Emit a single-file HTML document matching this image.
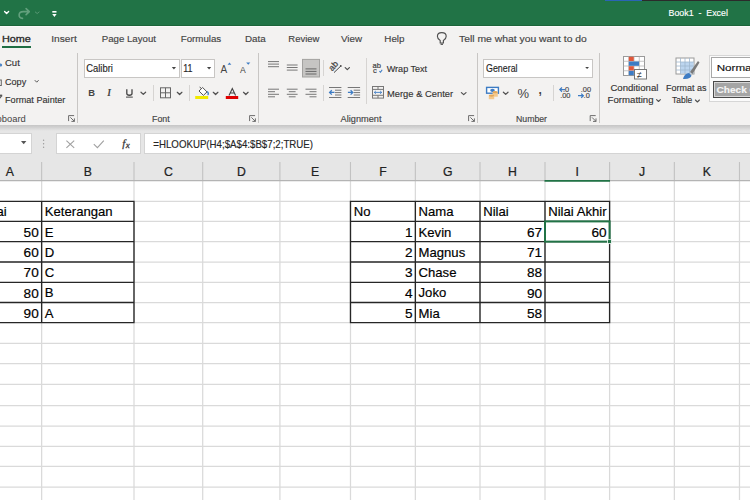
<!DOCTYPE html>
<html><head><meta charset="utf-8">
<style>
*{margin:0;padding:0;box-sizing:border-box}
html,body{width:750px;height:500px;overflow:hidden;background:#fff;font-family:"Liberation Sans",sans-serif;position:relative}
.a{position:absolute;white-space:pre}
.t{position:absolute;white-space:pre;transform-origin:0 0;line-height:normal}
.vd{position:absolute;width:1px;background:#c8c6c4}
.box{position:absolute;background:#fff;border:1px solid #c8c6c4}
.fb{position:absolute;background:#fff;border:1px solid #d4d4d4}
.ch{position:absolute;top:163px;font-size:13px;color:#333;text-align:center;height:18px;line-height:18px}
.cv{position:absolute;top:162px;width:1px;height:18px;background:#bababa}
.gv{position:absolute;top:181px;width:1px;height:319px;background:#dadada}
.gh{position:absolute;left:0;width:750px;height:1px;background:#dadada}
.c{position:absolute;font-size:13px;color:#000;white-space:pre;line-height:20px;height:20px}
.tb{position:absolute;background:#1a1a1a}
svg{position:absolute;left:0;top:0}
</style></head><body>
<div class="a" style="left:0;top:0;width:750px;height:26px;background:#217346"></div>
<div class="a" style="left:605px;top:0;width:37px;height:1px;background:#2a64b5"></div>
<div class="a" style="left:642px;top:0;width:108px;height:1px;background:#2b2b2b"></div>
<div class="a" style="left:0;top:26px;width:750px;height:99px;background:#f3f2f1"></div>
<div class="a" style="left:0;top:25px;width:750px;height:1px;background:#1c6439"></div>
<div class="a" style="left:0;top:26px;width:750px;height:1px;background:#fafafa"></div>
<div class="a" style="left:0;top:125px;width:750px;height:56px;background:#e6e6e6"></div>
<div class="a" style="left:0;top:125px;width:750px;height:6px;background:linear-gradient(#c6c6c6,#d0d0d0 35%,#dedede 75%,#e6e6e6)"></div>

<!-- tab underline -->
<div class="a" style="left:2px;top:46px;width:29px;height:2px;background:#1f6e43"></div>

<!-- dividers -->
<div class="vd" style="left:77px;top:53px;height:70px"></div>
<div class="vd" style="left:258px;top:53px;height:70px"></div>
<div class="vd" style="left:366px;top:58px;height:46px;background:#d6d4d2"></div>
<div class="vd" style="left:477px;top:53px;height:70px"></div>
<div class="vd" style="left:599px;top:53px;height:70px"></div>
<div class="vd" style="left:153px;top:85px;height:16px;background:#d6d4d2"></div>
<div class="vd" style="left:189px;top:85px;height:16px;background:#d6d4d2"></div>
<div class="vd" style="left:323px;top:60px;height:16px;background:#d6d4d2"></div>
<div class="vd" style="left:323px;top:85px;height:16px;background:#d6d4d2"></div>
<div class="vd" style="left:553px;top:85px;height:16px;background:#d6d4d2"></div>

<!-- combo boxes -->
<div class="box" style="left:84px;top:59px;width:96px;height:19px"></div>
<div class="box" style="left:181px;top:59px;width:34px;height:19px"></div>
<div class="box" style="left:483px;top:59px;width:110px;height:19px"></div>

<!-- styles gallery -->
<div class="a" style="left:709px;top:55px;width:60px;height:47px;border:1px solid #d6d6d6;background:#fbfbfb"></div>
<div class="a" style="left:711px;top:57px;width:60px;height:21px;border:1px solid #a8a8a8;background:#fff"></div>
<div class="a" style="left:713px;top:81px;width:60px;height:17px;background:#a5a5a5;border:1.5px solid #4a4a4a;box-shadow:inset 0 0 0 1px #d8d8d8"></div>
<!-- formula bar boxes -->
<div class="fb" style="left:-2px;top:133px;width:34px;height:21px"></div>
<div class="fb" style="left:56px;top:133px;width:85px;height:21px"></div>
<div class="fb" style="left:144px;top:133px;width:620px;height:21px"></div>

<!-- column I selected header -->



<svg width="750" height="500" viewBox="0 0 750 500" style="position:absolute;left:0;top:0;font-family:'Liberation Sans',sans-serif">
<path d="M0,343.36 H750 M0,363.52 H750 M0,384.48 H750 M0,405.6 H750 M0,426.24 H750 M0,446.36 H750 M0,466.48 H750 M0,487.12 H750 M134,201.4 H350 M609.6,201.4 H750 M134,221.4 H350 M609.6,221.4 H750 M134,241.64 H350 M609.6,241.64 H750 M134,262.0 H350 M609.6,262.0 H750 M134,282.4 H350 M609.6,282.4 H750 M134,302.5 H350 M609.6,302.5 H750 M134,322.6 H350 M609.6,322.6 H750 M41.64,181 V500 M134.0,181 V500 M202.7,181 V500 M279.9,181 V500 M350.48,181 V500 M415.36,181 V500 M480.0,181 V500 M545.0,181 V500 M609.6,181 V500 M674.36,181 V500 M739.48,181 V500" stroke="#dadada" stroke-width="1.25" fill="none"/>
<path d="M41.64,162 V180.5 M134.0,162 V180.5 M202.7,162 V180.5 M279.9,162 V180.5 M350.48,162 V180.5 M415.36,162 V180.5 M480.0,162 V180.5 M545.0,162 V180.5 M609.6,162 V180.5 M674.36,162 V180.5 M739.48,162 V180.5" stroke="#c2c2c2" stroke-width="1.1" fill="none"/>
<path d="M0,180.6 H750" stroke="#b4b4b4" stroke-width="1.2"/>
<path d="M544.5,180.9 H610" stroke="#217346" stroke-width="1.8"/>
<path d="M-5,201.4 H134.6 M349.8,201.4 H610.3 M-5,221.4 H134.6 M349.8,221.4 H610.3 M-5,241.64 H134.6 M349.8,241.64 H610.3 M-5,262.0 H134.6 M349.8,262.0 H610.3 M-5,282.4 H134.6 M349.8,282.4 H610.3 M-5,302.5 H134.6 M349.8,302.5 H610.3 M-5,322.6 H134.6 M349.8,322.6 H610.3 M41.64,201.4 V322.6 M134.0,201.4 V322.6 M350.48,201.4 V322.6 M415.36,201.4 V322.6 M480.0,201.4 V322.6 M545.0,201.4 V322.6 M609.6,201.4 V322.6" stroke="#262626" stroke-width="1.35" fill="none"/>
<rect x="545.0" y="221.4" width="64.60000000000002" height="20.23999999999998" fill="none" stroke="#217346" stroke-width="2"/>
<rect x="607.6" y="239.64" width="4" height="4" fill="#217346" stroke="#fff" stroke-width="0.8"/>
<text x="9.82" y="176" font-size="13.6" fill="#222" stroke="#222" stroke-width="0.25" text-anchor="middle" transform="translate(9.82,0) scale(0.9,1) translate(-9.82,0)">A</text>
<text x="87.82" y="176" font-size="13.6" fill="#222" stroke="#222" stroke-width="0.25" text-anchor="middle" transform="translate(87.82,0) scale(0.9,1) translate(-87.82,0)">B</text>
<text x="168.35" y="176" font-size="13.6" fill="#222" stroke="#222" stroke-width="0.25" text-anchor="middle" transform="translate(168.35,0) scale(0.9,1) translate(-168.35,0)">C</text>
<text x="241.30" y="176" font-size="13.6" fill="#222" stroke="#222" stroke-width="0.25" text-anchor="middle" transform="translate(241.30,0) scale(0.9,1) translate(-241.30,0)">D</text>
<text x="315.19" y="176" font-size="13.6" fill="#222" stroke="#222" stroke-width="0.25" text-anchor="middle" transform="translate(315.19,0) scale(0.9,1) translate(-315.19,0)">E</text>
<text x="382.92" y="176" font-size="13.6" fill="#222" stroke="#222" stroke-width="0.25" text-anchor="middle" transform="translate(382.92,0) scale(0.9,1) translate(-382.92,0)">F</text>
<text x="447.68" y="176" font-size="13.6" fill="#222" stroke="#222" stroke-width="0.25" text-anchor="middle" transform="translate(447.68,0) scale(0.9,1) translate(-447.68,0)">G</text>
<text x="512.50" y="176" font-size="13.6" fill="#222" stroke="#222" stroke-width="0.25" text-anchor="middle" transform="translate(512.50,0) scale(0.9,1) translate(-512.50,0)">H</text>
<text x="577.30" y="176" font-size="13.6" fill="#222" stroke="#222" stroke-width="0.25" text-anchor="middle" transform="translate(577.30,0) scale(0.9,1) translate(-577.30,0)">I</text>
<text x="641.98" y="176" font-size="13.6" fill="#222" stroke="#222" stroke-width="0.25" text-anchor="middle" transform="translate(641.98,0) scale(0.9,1) translate(-641.98,0)">J</text>
<text x="706.92" y="176" font-size="13.6" fill="#222" stroke="#222" stroke-width="0.25" text-anchor="middle" transform="translate(706.92,0) scale(0.9,1) translate(-706.92,0)">K</text>
<text x="771.74" y="176" font-size="13.6" fill="#222" stroke="#222" stroke-width="0.25" text-anchor="middle" transform="translate(771.74,0) scale(0.9,1) translate(-771.74,0)">L</text>
<text x="-18.80" y="216.40" font-size="13.6" fill="#000" stroke="#000" stroke-width="0.18" transform="translate(-18.80,0) scale(0.965,1) translate(18.80,0)">Nilai</text>
<text x="44.84" y="216.40" font-size="13.6" fill="#000" stroke="#000" stroke-width="0.18" transform="translate(44.84,0) scale(0.965,1) translate(-44.84,0)">Keterangan</text>
<text x="38.74" y="236.64" font-size="13.6" fill="#000" stroke="#000" stroke-width="0.18" text-anchor="end">50</text>
<text x="44.84" y="236.64" font-size="13.6" fill="#000" stroke="#000" stroke-width="0.18" transform="translate(44.84,0) scale(0.965,1) translate(-44.84,0)">E</text>
<text x="38.74" y="257.00" font-size="13.6" fill="#000" stroke="#000" stroke-width="0.18" text-anchor="end">60</text>
<text x="44.84" y="257.00" font-size="13.6" fill="#000" stroke="#000" stroke-width="0.18" transform="translate(44.84,0) scale(0.965,1) translate(-44.84,0)">D</text>
<text x="38.74" y="277.40" font-size="13.6" fill="#000" stroke="#000" stroke-width="0.18" text-anchor="end">70</text>
<text x="44.84" y="277.40" font-size="13.6" fill="#000" stroke="#000" stroke-width="0.18" transform="translate(44.84,0) scale(0.965,1) translate(-44.84,0)">C</text>
<text x="38.74" y="297.50" font-size="13.6" fill="#000" stroke="#000" stroke-width="0.18" text-anchor="end">80</text>
<text x="44.84" y="297.50" font-size="13.6" fill="#000" stroke="#000" stroke-width="0.18" transform="translate(44.84,0) scale(0.965,1) translate(-44.84,0)">B</text>
<text x="38.74" y="317.60" font-size="13.6" fill="#000" stroke="#000" stroke-width="0.18" text-anchor="end">90</text>
<text x="44.84" y="317.60" font-size="13.6" fill="#000" stroke="#000" stroke-width="0.18" transform="translate(44.84,0) scale(0.965,1) translate(-44.84,0)">A</text>
<text x="353.68" y="216.40" font-size="13.6" fill="#000" stroke="#000" stroke-width="0.18" transform="translate(353.68,0) scale(0.965,1) translate(-353.68,0)">No</text>
<text x="418.56" y="216.40" font-size="13.6" fill="#000" stroke="#000" stroke-width="0.18" transform="translate(418.56,0) scale(0.965,1) translate(-418.56,0)">Nama</text>
<text x="483.20" y="216.40" font-size="13.6" fill="#000" stroke="#000" stroke-width="0.18" transform="translate(483.20,0) scale(0.965,1) translate(-483.20,0)">Nilai</text>
<text x="548.20" y="216.40" font-size="13.6" fill="#000" stroke="#000" stroke-width="0.18" transform="translate(548.20,0) scale(0.965,1) translate(-548.20,0)">Nilai Akhir</text>
<text x="412.46" y="236.64" font-size="13.6" fill="#000" stroke="#000" stroke-width="0.18" text-anchor="end">1</text>
<text x="418.56" y="236.64" font-size="13.6" fill="#000" stroke="#000" stroke-width="0.18" transform="translate(418.56,0) scale(0.965,1) translate(-418.56,0)">Kevin</text>
<text x="542.10" y="236.64" font-size="13.6" fill="#000" stroke="#000" stroke-width="0.18" text-anchor="end">67</text>
<text x="412.46" y="257.00" font-size="13.6" fill="#000" stroke="#000" stroke-width="0.18" text-anchor="end">2</text>
<text x="418.56" y="257.00" font-size="13.6" fill="#000" stroke="#000" stroke-width="0.18" transform="translate(418.56,0) scale(0.965,1) translate(-418.56,0)">Magnus</text>
<text x="542.10" y="257.00" font-size="13.6" fill="#000" stroke="#000" stroke-width="0.18" text-anchor="end">71</text>
<text x="412.46" y="277.40" font-size="13.6" fill="#000" stroke="#000" stroke-width="0.18" text-anchor="end">3</text>
<text x="418.56" y="277.40" font-size="13.6" fill="#000" stroke="#000" stroke-width="0.18" transform="translate(418.56,0) scale(0.965,1) translate(-418.56,0)">Chase</text>
<text x="542.10" y="277.40" font-size="13.6" fill="#000" stroke="#000" stroke-width="0.18" text-anchor="end">88</text>
<text x="412.46" y="297.50" font-size="13.6" fill="#000" stroke="#000" stroke-width="0.18" text-anchor="end">4</text>
<text x="418.56" y="297.50" font-size="13.6" fill="#000" stroke="#000" stroke-width="0.18" transform="translate(418.56,0) scale(0.965,1) translate(-418.56,0)">Joko</text>
<text x="542.10" y="297.50" font-size="13.6" fill="#000" stroke="#000" stroke-width="0.18" text-anchor="end">90</text>
<text x="412.46" y="317.60" font-size="13.6" fill="#000" stroke="#000" stroke-width="0.18" text-anchor="end">5</text>
<text x="418.56" y="317.60" font-size="13.6" fill="#000" stroke="#000" stroke-width="0.18" transform="translate(418.56,0) scale(0.965,1) translate(-418.56,0)">Mia</text>
<text x="542.10" y="317.60" font-size="13.6" fill="#000" stroke="#000" stroke-width="0.18" text-anchor="end">58</text>
<text x="606.70" y="236.64" font-size="13.6" fill="#000" stroke="#000" stroke-width="0.18" text-anchor="end">60</text>
<text x="668.50" y="15.60" font-size="9.8" fill="#fff" style="white-space:pre;stroke:#fff;stroke-width:0.15;" transform="translate(668.50,0) scale(0.902,1) translate(-668.50,0)">Book1  -  Excel</text>
<text x="1.90" y="42.10" font-size="9.5" fill="#262626" style="white-space:pre;stroke:#262626;stroke-width:0.15;stroke:#262626;stroke-width:0.3" transform="translate(1.90,0) scale(1.140,1) translate(-1.90,0)">Home</text>
<text x="51.23" y="42.10" font-size="9.5" fill="#444" style="white-space:pre;stroke:#444;stroke-width:0.15;" transform="translate(51.23,0) scale(1.074,1) translate(-51.23,0)">Insert</text>
<text x="101.70" y="42.10" font-size="9.5" fill="#444" style="white-space:pre;stroke:#444;stroke-width:0.15;" transform="translate(101.70,0) scale(1.019,1) translate(-101.70,0)">Page Layout</text>
<text x="180.70" y="42.10" font-size="9.5" fill="#444" style="white-space:pre;stroke:#444;stroke-width:0.15;" transform="translate(180.70,0) scale(1.025,1) translate(-180.70,0)">Formulas</text>
<text x="245.00" y="42.10" font-size="9.5" fill="#444" style="white-space:pre;stroke:#444;stroke-width:0.15;" transform="translate(245.00,0) scale(1.035,1) translate(-245.00,0)">Data</text>
<text x="288.30" y="42.10" font-size="9.5" fill="#444" style="white-space:pre;stroke:#444;stroke-width:0.15;" transform="translate(288.30,0) scale(1.000,1) translate(-288.30,0)">Review</text>
<text x="341.00" y="42.10" font-size="9.5" fill="#444" style="white-space:pre;stroke:#444;stroke-width:0.15;" transform="translate(341.00,0) scale(1.033,1) translate(-341.00,0)">View</text>
<text x="384.30" y="42.10" font-size="9.5" fill="#444" style="white-space:pre;stroke:#444;stroke-width:0.15;" transform="translate(384.30,0) scale(1.035,1) translate(-384.30,0)">Help</text>
<text x="459.00" y="42.10" font-size="9.5" fill="#444" style="white-space:pre;stroke:#444;stroke-width:0.15;" transform="translate(459.00,0) scale(1.092,1) translate(-459.00,0)">Tell me what you want to do</text>
<text x="5.00" y="65.80" font-size="9.8" fill="#333" style="white-space:pre;stroke:#333;stroke-width:0.15;" transform="translate(5.00,0) scale(0.973,1) translate(-5.00,0)">Cut</text>
<text x="5.00" y="84.60" font-size="9.8" fill="#333" style="white-space:pre;stroke:#333;stroke-width:0.15;" transform="translate(5.00,0) scale(0.926,1) translate(-5.00,0)">Copy</text>
<text x="5.00" y="102.80" font-size="9.8" fill="#333" style="white-space:pre;stroke:#333;stroke-width:0.15;" transform="translate(5.00,0) scale(0.932,1) translate(-5.00,0)">Format Painter</text>
<text x="-14.40" y="121.70" font-size="9.4" fill="#444" style="">Clipboard</text>
<text x="86.20" y="72.10" font-size="10" fill="#262626" style="white-space:pre;stroke:#262626;stroke-width:0.15;" transform="translate(86.20,0) scale(0.943,1) translate(-86.20,0)">Calibri</text>
<text x="183.31" y="72.10" font-size="10" fill="#262626" style="white-space:pre;stroke:#262626;stroke-width:0.15;" transform="translate(183.31,0) scale(0.889,1) translate(-183.31,0)">11</text>
<text x="152.00" y="121.70" font-size="9.4" fill="#444" style="white-space:pre;stroke:#444;stroke-width:0.15;" transform="translate(152.00,0) scale(0.942,1) translate(-152.00,0)">Font</text>
<text x="386.70" y="72.10" font-size="9.8" fill="#333" style="white-space:pre;stroke:#333;stroke-width:0.15;" transform="translate(386.70,0) scale(0.923,1) translate(-386.70,0)">Wrap Text</text>
<text x="387.00" y="96.90" font-size="9.8" fill="#333" style="white-space:pre;stroke:#333;stroke-width:0.15;" transform="translate(387.00,0) scale(0.957,1) translate(-387.00,0)">Merge &amp; Center</text>
<text x="340.60" y="121.90" font-size="9.4" fill="#444" style="white-space:pre;stroke:#444;stroke-width:0.15;" transform="translate(340.60,0) scale(0.979,1) translate(-340.60,0)">Alignment</text>
<text x="486.10" y="72.20" font-size="10" fill="#262626" style="white-space:pre;stroke:#262626;stroke-width:0.15;" transform="translate(486.10,0) scale(0.883,1) translate(-486.10,0)">General</text>
<text x="516.00" y="122.00" font-size="9.4" fill="#444" style="white-space:pre;stroke:#444;stroke-width:0.15;" transform="translate(516.00,0) scale(0.929,1) translate(-516.00,0)">Number</text>
<text x="610.40" y="91.30" font-size="9.8" fill="#333" style="white-space:pre;stroke:#333;stroke-width:0.15;" transform="translate(610.40,0) scale(0.980,1) translate(-610.40,0)">Conditional</text>
<text x="607.60" y="103.40" font-size="9.8" fill="#333" style="white-space:pre;stroke:#333;stroke-width:0.15;" transform="translate(607.60,0) scale(0.983,1) translate(-607.60,0)">Formatting</text>
<text x="666.10" y="91.30" font-size="9.8" fill="#333" style="white-space:pre;stroke:#333;stroke-width:0.15;" transform="translate(666.10,0) scale(0.916,1) translate(-666.10,0)">Format as</text>
<text x="672.00" y="103.50" font-size="9.8" fill="#333" style="white-space:pre;stroke:#333;stroke-width:0.15;" transform="translate(672.00,0) scale(0.865,1) translate(-672.00,0)">Table</text>
<text x="716.70" y="71.20" font-size="9.8" fill="#111" style="white-space:pre;stroke:#111;stroke-width:0.15;" transform="translate(716.70,0) scale(1.187,1) translate(-716.70,0)">Normal</text>
<text x="716.60" y="92.80" font-size="9.8" fill="#f4f4f4" style="white-space:pre;stroke:#f4f4f4;stroke-width:0.15;font-weight:bold" transform="translate(716.60,0) scale(1.028,1) translate(-716.60,0)">Check Cell</text>
<text x="153.30" y="148.20" font-size="10" fill="#262626" style="white-space:pre;stroke:#262626;stroke-width:0.15;" transform="translate(153.30,0) scale(0.970,1) translate(-153.30,0)">=HLOOKUP(H4;$A$4:$B$7;2;TRUE)</text>
</svg>
<svg width="750" height="162" viewBox="0 0 750 162" style="font-family:'Liberation Sans',sans-serif">
<!-- quick access -->
<g fill="none" stroke-linecap="round" stroke-linejoin="round">
<polyline points="4.6,11.6 6.6,13.6 8.6,11.6" stroke="#fff" stroke-width="1.4"/>
<path d="M22.5,18.4 C17.8,17.6 18,11.6 23.2,11.6 L29.3,11.6 M26.1,8.6 L29.3,11.6 L26.1,14.6" stroke="#63a07d" stroke-width="1.6"/>
<polyline points="35.3,12 37.2,13.5 39.1,12" stroke="#5c9b77" stroke-width="0.9"/>
</g>
<rect x="52.3" y="11" width="4.2" height="1.6" fill="#fff"/>
<polygon points="52.2,14 56.6,14 54.4,16.9" fill="#fff"/>

<!-- lightbulb -->
<g fill="none" stroke="#505050" stroke-width="1.15">
<path d="M440.2,43 L440.2,40.6 C438.3,39.5 437.4,37.9 437.4,36.3 C437.4,34 439.4,32.6 441.8,32.6 C444.2,32.6 446.2,34 446.2,36.3 C446.2,37.9 445.3,39.5 443.4,40.6 L443.4,43 Z"/>
</g>
<rect x="440.6" y="43.6" width="2.4" height="1.3" fill="#505050"/>

<!-- clipboard partial icons -->
<circle cx="0.6" cy="65" r="1.6" fill="#4f86c6"/>
<rect x="-3" y="80" width="4.3" height="5.5" fill="none" stroke="#666" stroke-width="1"/>
<path d="M-1,99 L1.8,95.5" stroke="#555" stroke-width="1.3"/>
<rect x="0" y="94.6" width="2.2" height="1.6" fill="#555"/>
<polyline points="34.8,80.2 36.7,82.2 38.6,80.2" fill="none" stroke="#555" stroke-width="1"/>

<!-- dialog launchers -->
<g fill="none" stroke="#666" stroke-width="0.95">
<path d="M68.6,121.1 V115.6 H74.1 M70.39999999999999,117.39999999999999 L74.39999999999999,121.39999999999999 M74.39999999999999,118.39999999999999 V121.39999999999999 H71.39999999999999" />
<path d="M249.6,121.1 V115.6 H255.1 M251.4,117.39999999999999 L255.4,121.39999999999999 M255.4,118.39999999999999 V121.39999999999999 H252.4" />
<path d="M468.6,121.1 V115.6 H474.1 M470.40000000000003,117.39999999999999 L474.40000000000003,121.39999999999999 M474.40000000000003,118.39999999999999 V121.39999999999999 H471.40000000000003" />
<path d="M590.2,121.1 V115.6 H595.7 M592.0,117.39999999999999 L596.0,121.39999999999999 M596.0,118.39999999999999 V121.39999999999999 H593.0" />
</g>

<!-- combo triangles -->
<polygon points="171.8,67 176,67 173.9,69.4" fill="#444"/>
<polygon points="207,67 211.2,67 209.1,69.4" fill="#444"/>
<polygon points="585.2,67 589,67 587.1,69" fill="#444"/>
<polygon points="21,141 26.4,141 23.7,144.2" fill="#555"/>

<!-- grow / shrink font -->
<text x="220.6" y="72.8" font-size="10" fill="#444">A</text>
<polygon points="227.6,64.7 231.3,64.7 229.45,62.6" fill="#3d7cc4"/>
<text x="239.9" y="72.8" font-size="8.6" fill="#444">A</text>
<polygon points="246.2,62.5 250.3,62.5 248.25,64.7" fill="#3d7cc4"/>

<!-- B I U -->
<text x="88.3" y="96.1" font-size="9.4" font-weight="bold" fill="#444">B</text>
<text x="107.2" y="96.2" font-size="9.6" font-weight="bold" font-style="italic" fill="#444" style="font-family:'Liberation Serif',serif">I</text>
<path d="M126.8,89.3 L126.8,93.5 C126.8,95.8 132,95.8 132,93.5 L132,89.3" stroke="#444" stroke-width="1.3" fill="none"/>
<rect x="126" y="96.6" width="6.8" height="1" fill="#444"/>
<g fill="none" stroke="#505050" stroke-width="1.25" stroke-linecap="round" stroke-linejoin="round">
<polyline points="141,92.2 143.3,94.4 145.6,92.2"/>
<polyline points="177.3,92.3 179.6,94.5 181.9,92.3"/>
<polyline points="213.3,92.3 215.6,94.5 217.9,92.3"/>
<polyline points="243.5,92.3 245.8,94.5 248.1,92.3"/>
<polyline points="345.2,67.6 347.3,69.6 349.4,67.6"/>
<polyline points="461.4,92.6 463.7,94.6 466,92.6"/>
<polyline points="503.4,92.2 505.7,94.4 508,92.2"/>
<polyline points="656.6,99.6 658.5,101.5 660.4,99.6" stroke-width="1.1"/>
<polyline points="695.4,100 697.4,102 699.4,100" stroke-width="1.1"/>
</g>
<!-- borders icon -->
<g fill="none" stroke="#666" stroke-width="1">
<rect x="160.5" y="87.8" width="10" height="10"/>
<line x1="165.5" y1="87.8" x2="165.5" y2="97.8"/>
<line x1="160.5" y1="92.8" x2="170.5" y2="92.8"/>
</g>
<!-- fill color -->
<path d="M199,91 L202.6,87.5 L207,91.9 L203.4,95.4 Z" fill="#fff" stroke="#555" stroke-width="1"/>
<path d="M201,88.5 L199.8,86.8" stroke="#555" stroke-width="1"/>
<path d="M207.2,91.5 C208.6,92.8 208.6,94.3 207.6,94.8" stroke="#3d7cc4" stroke-width="1.4" fill="none"/>
<rect x="195.2" y="96" width="13" height="3" fill="#f2ea00"/>
<!-- font color -->
<path d="M229,95.6 L232.3,88.6 L235.6,95.6 M230.3,93 L234.3,93" stroke="#444" stroke-width="1.1" fill="none"/>
<rect x="225.8" y="96" width="12.4" height="3" fill="#e00000"/>

<!-- alignment -->
<g stroke="#777" stroke-width="1" fill="none">
<path d="M268,61.6 H279 M268,64.1 H279 M268,66.7 H279"/>
<path d="M286.8,65 H297.6 M286.8,67.5 H297.6 M286.8,70.1 H297.6"/>
<path d="M268,89.2 H279 M268,91.7 H275 M268,94.3 H279 M268,96.8 H275"/>
<path d="M286.8,89.2 H297.6 M288.8,91.7 H295.6 M286.8,94.3 H297.6 M288.8,96.8 H295.6"/>
<path d="M305.5,89.2 H316.5 M309.5,91.7 H316.5 M305.5,94.3 H316.5 M309.5,96.8 H316.5"/>
</g>
<rect x="302.5" y="59.4" width="17" height="17.6" fill="#c6c5c3" stroke="#a3a2a0" stroke-width="1"/>
<path d="M305.5,68.9 H316.5 M305.5,71.4 H316.5 M305.5,74 H316.5" stroke="#666" stroke-width="1"/>
<!-- orientation -->
<text x="0" y="0" font-size="8.6" fill="#444" style="stroke:#444;stroke-width:0.25" transform="translate(332.2,71.4) rotate(-48)">ab</text>
<path d="M334,72.6 L340.6,66.2" stroke="#444" stroke-width="1" fill="none"/>
<circle cx="340.8" cy="66" r="0.9" fill="#444"/>
<!-- indent -->
<g stroke="#777" stroke-width="1" fill="none">
<path d="M329,87.5 H341.4 M335,90.2 H341.4 M335,92.6 H341.4 M335,95 H341.4 M329,97.5 H341.4"/>
<path d="M347.7,87.5 H360.1 M353.7,90.2 H360.1 M353.7,92.6 H360.1 M353.7,95 H360.1 M347.7,97.5 H360.1"/>
</g>
<path d="M334.5,92.4 H329.6 M331.8,90.2 L329.6,92.4 L331.8,94.6" stroke="#3d7cc4" stroke-width="1.3" fill="none"/>
<path d="M347.9,92.4 H352.8 M350.6,90.2 L352.8,92.4 L350.6,94.6" stroke="#3d7cc4" stroke-width="1.3" fill="none"/>
<!-- wrap text icon -->
<text x="372.6" y="68.2" font-size="7.6" fill="#444" style="stroke:#444;stroke-width:0.2">ab</text>
<text x="372.9" y="73.4" font-size="7.6" fill="#444" style="stroke:#444;stroke-width:0.2">c</text>
<path d="M379.4,71.2 L380.5,72.2 L382.2,69.8" stroke="#3d7cc4" stroke-width="1.1" fill="none"/>
<!-- merge icon -->
<g fill="none" stroke="#777" stroke-width="1">
<rect x="372.5" y="86.5" width="11" height="11.6"/>
<path d="M372.5,89.4 H383.5 M372.5,95.3 H383.5 M378,86.5 V89.4 M378,95.3 V98.1"/>
</g>
<path d="M374.3,92.4 H381.7 M375.8,91 L374.3,92.4 L375.8,93.8 M380.2,91 L381.7,92.4 L380.2,93.8" stroke="#3d7cc4" stroke-width="0.9" fill="none"/>

<!-- number icons -->
<rect x="486.6" y="87.4" width="11.8" height="5.8" fill="#fff" stroke="#3d7cc4" stroke-width="1.4"/>
<ellipse cx="492.5" cy="90.3" rx="2.3" ry="1.6" fill="#3d7cc4"/>
<rect x="492.6" y="92.2" width="5.2" height="4.5" fill="#f3c98e"/>
<ellipse cx="495.2" cy="92.2" rx="2.6" ry="1.1" fill="#e3a95c"/>
<rect x="488.8" y="95.6" width="5.4" height="3.6" fill="#f3c98e"/>
<ellipse cx="491.5" cy="95.6" rx="2.7" ry="1.1" fill="#e3a95c"/>
<text x="517.4" y="98.2" font-size="13" fill="#444">%</text>
<text x="538.4" y="93.6" font-size="12" font-weight="bold" fill="#444">,</text>
<g font-size="7.4" fill="#444" style="stroke:#444;stroke-width:0.15">
<text x="563" y="92">.0</text>
<text x="560.2" y="98.3">.00</text>
<text x="580.8" y="92">.00</text>
<text x="583.6" y="98.3">.0</text>
</g>
<path d="M565.2,89.6 H559.8 M562,87.5 L559.8,89.6 L562,91.7" stroke="#3d7cc4" stroke-width="1.2" fill="none"/>
<path d="M578,95.7 H583.4 M581.2,93.6 L583.4,95.7 L581.2,97.8" stroke="#3d7cc4" stroke-width="1.2" fill="none"/>

<!-- conditional formatting icon -->
<g>
<rect x="623.5" y="56.5" width="21" height="19" fill="#fff" stroke="#9a9a9a" stroke-width="1"/>
<path d="M623.5,61.25 H644.5 M623.5,66 H644.5 M623.5,70.75 H644.5 M628.75,56.5 V75.5 M634,56.5 V75.5 M639.25,56.5 V75.5" stroke="#b5b5b5" stroke-width="0.8"/>
<rect x="628.8" y="56.8" width="5" height="4.3" fill="#e0573a"/>
<rect x="628.8" y="61.5" width="10.3" height="4.3" fill="#3d7cc4"/>
<rect x="628.8" y="66.2" width="5" height="4.3" fill="#e0573a"/>
<rect x="628.8" y="70.9" width="5" height="4.3" fill="#3d7cc4"/>
<rect x="634.5" y="69.5" width="12" height="9.5" fill="#fff" stroke="#777" stroke-width="1"/>
<text x="637" y="77.6" font-size="9" fill="#333">≠</text>
</g>
<!-- format as table icon -->
<g>
<rect x="676" y="58" width="18" height="16" fill="#fff" stroke="#9a9a9a" stroke-width="1"/>
<rect x="680.5" y="62" width="13" height="11.5" fill="#bcd5ef"/>
<path d="M676,62 H694 M676,66 H694 M676,70 H694 M680.5,58 V74 M685,58 V74 M689.5,58 V74" stroke="#9fb7cf" stroke-width="0.8"/>
<path d="M683,79 C684,75 686,73.5 689,73 L691.5,75.5 C691,78 688,79.5 683,79 Z" fill="#3d7cc4"/>
<path d="M690,72 L698,61 L699.5,62.5 L692.5,74 Z" fill="#7a7a7a"/>
</g>

<!-- formula bar icons -->
<g fill="#9a9a9a">
<circle cx="43.6" cy="140.3" r="0.7"/><circle cx="43.6" cy="143.8" r="0.7"/><circle cx="43.6" cy="147.3" r="0.7"/>
</g>
<path d="M66.4,140.6 L74.2,147.8 M74.2,140.6 L66.4,147.8" stroke="#a0a0a0" stroke-width="1.1" fill="none"/>
<path d="M93.8,144.2 L97.4,147.6 L103.8,140.6" stroke="#a0a0a0" stroke-width="1.1" fill="none"/>
<text x="122.2" y="147.4" font-size="11" font-style="italic" fill="#3a3a3a" style="font-family:'Liberation Serif',serif;stroke:#3a3a3a;stroke-width:0.3">f</text>
<text x="125.8" y="147.8" font-size="9" font-style="italic" fill="#3a3a3a" style="font-family:'Liberation Serif',serif;stroke:#3a3a3a;stroke-width:0.3">x</text>
</svg>

</body></html>
